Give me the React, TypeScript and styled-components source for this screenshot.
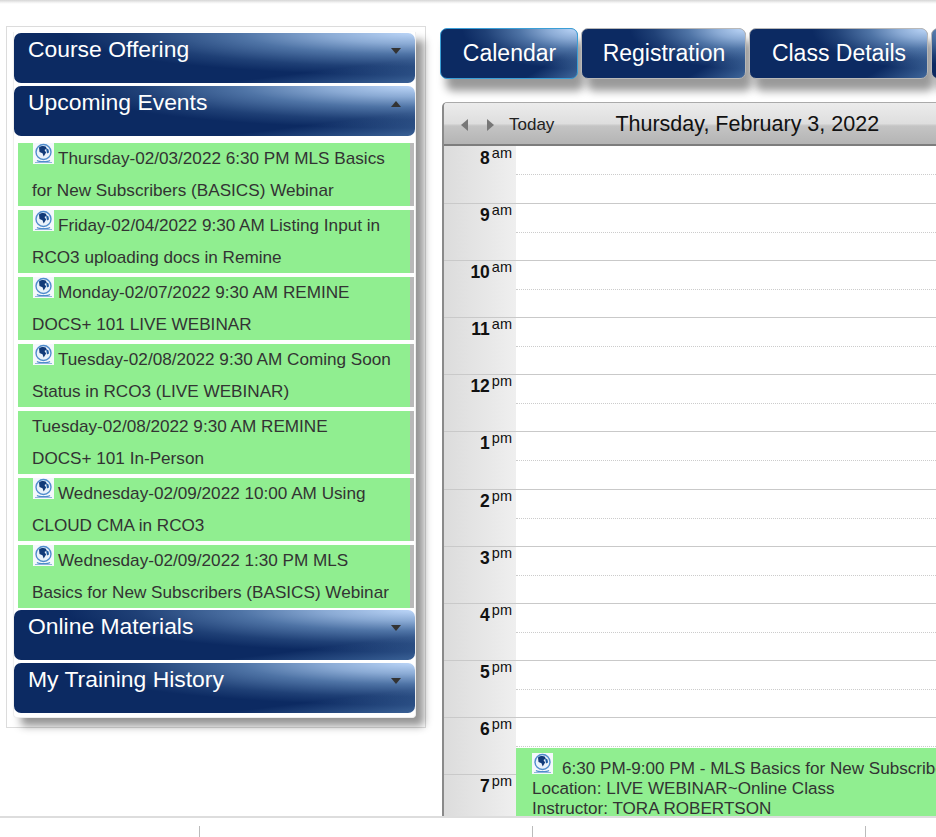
import React from "react";
import styled, { createGlobalStyle } from "styled-components";

const GlobalStyle = createGlobalStyle`
  html, body {
    margin: 0;
    padding: 0;
    height: 100%;
    overflow: hidden;
    background: #fff;
    font-family: "Liberation Sans", Arial, sans-serif;
  }
`;

const Page = styled.div`
  width: 936px;
  height: 837px;
  overflow: hidden;
  display: flex;
  flex-direction: column;
`;

const TopEdge = styled.div`
  height: 4px;
  flex: none;
  background: linear-gradient(to bottom, #d6d6d6, #f6f6f6 70%, #fff);
`;

const Main = styled.main`
  height: 812px;
  flex: none;
  overflow: hidden;
  display: flex;
  align-items: flex-start;
  padding: 22px 0 0 6px;
  box-sizing: border-box;
`;

const Sidebar = styled.aside`
  width: 420px;
  height: 702px;
  flex: none;
  box-sizing: border-box;
  border: 1px solid #dcdcdc;
  padding: 5px 0 0 6px;
`;

const Accordion = styled.div`
  width: 403px;
  height: 686px;
  box-sizing: border-box;
  padding-top: 1px;
  background: #fff;
  border: 1px solid #eee;
  border-top: none;
  border-radius: 0 0 4px 4px;
  box-shadow: 8px 8px 8px rgba(0, 0, 0, 0.42);
`;

const SectionHeader = styled.div<{ $gap?: number }>`
  height: 50px;
  margin-top: ${(p) => p.$gap ?? 0}px;
  padding: 2px 14px 0 14px;
  box-sizing: border-box;
  display: flex;
  justify-content: space-between;
  color: #fff;
  font-size: 22.9px;
  line-height: 28px;
  border-radius: 7px;
  background:
    linear-gradient(173deg, transparent 76%, rgba(90, 135, 185, 0.6) 100%),
    radial-gradient(ellipse 350px 42px at 100% 0, #bcd6f8 0%, #8aaad4 26%, #4f74a6 50%, #1f4076 80%, #0c2a62 100%);
  background-color: #0c2a62;
`;

const Caret = styled.span<{ $open?: boolean }>`
  width: 0;
  height: 0;
  margin-top: 13px;
  border-left: 5px solid transparent;
  border-right: 5px solid transparent;
  ${(p) =>
    p.$open
      ? "border-bottom: 6px solid #333;"
      : "border-top: 6px solid #333;"}
`;

const EventList = styled.div`
  display: flex;
  flex-direction: column;
  gap: 4px;
  padding: 7px 1px 2px 4px;
`;

const EventItem = styled.div`
  height: 63px;
  box-sizing: border-box;
  padding-left: 14px;
  background: #90ee90;
  border-right: 4px solid #b9b9b9;
  color: #333;
  font-size: 17.15px;
  line-height: 31.5px;
  white-space: nowrap;
  overflow: hidden;
`;

const GlobeBox = styled.svg<{ $inEvent?: boolean }>`
  display: inline-block;
  width: 21px;
  height: 21px;
  margin: ${(p) => (p.$inEvent ? "0 9px 0 0" : "0 4px 0 1px")};
  vertical-align: ${(p) => (p.$inEvent ? "baseline" : "top")};
`;

const Globe = ({ inEvent }: { inEvent?: boolean }) => (
  <GlobeBox viewBox="0 0 21 21" $inEvent={inEvent}>
    <rect width="21" height="21" fill="#f4f8fc" />
    <circle cx="10.5" cy="9" r="7.5" fill="#eaf2fa" stroke="#4f8ccc" strokeWidth="1.4" />
    <path d="M6 4.5c2-1.6 5-1.8 7 -.8l.5 2-2 1.2 1.6 2.6-2.4 4-1.2-3.2-3-1.4z" fill="#123a78" />
    <path d="M13 5l2.5 1.5.5 3-2 1z" fill="#1f5aa0" />
    <path d="M4 17.5c2 1.6 11 1.6 13 0" fill="none" stroke="#4f8ccc" strokeWidth="1.4" />
    <path d="M2 19.5h17" stroke="#8fb4dc" strokeWidth="1" />
  </GlobeBox>
);

const Content = styled.section`
  flex: 1;
  min-width: 0;
  margin-left: 14px;
  padding-top: 2px;
`;

const Tabs = styled.nav`
  display: flex;
  gap: 3px;
  height: 50px;
  width: 520px;
`;

const Tab = styled.div<{ $active?: boolean; $width: number }>`
  width: ${(p) => p.$width}px;
  flex: none;
  height: 51px;
  box-sizing: border-box;
  padding-left: 1px;
  display: flex;
  align-items: center;
  justify-content: center;
  color: #fff;
  font-size: 23px;
  border-radius: 7px;
  border: 1px solid ${(p) => (p.$active ? "#3b9fd6" : "#b8b8b8")};
  background:
    linear-gradient(149deg, transparent 76%, rgba(90, 135, 185, 0.65) 100%),
    radial-gradient(ellipse 115px 40px at 100% 0, #bcd6f8 0%, #8aaad4 26%, #4f74a6 50%, #1f4076 80%, #0c2a62 100%);
  background-color: #0c2a62;
  box-shadow: 6px 12px 8px rgba(0, 0, 0, 0.4);
`;

const Calendar = styled.div`
  margin: 24px 0 0 2px;
  border-left: 2px solid #8a8a8a;
  border-top: 1px solid #aaa;
  border-top-left-radius: 5px;
  width: 500px;
  height: 719px;
  overflow: hidden;
`;

const CalendarBar = styled.div`
  height: 43px;
  box-sizing: border-box;
  display: flex;
  align-items: center;
  padding: 2px 0 0 17px;
  border-bottom: 2px solid #7d7d7d;
  background: linear-gradient(to bottom, #ececec 0%, #dedede 50%, #c4c4c4 56%, #b4b4b4 100%);
`;

const NavArrow = styled.span<{ $dir: "left" | "right" }>`
  width: 0;
  height: 0;
  margin-right: ${(p) => (p.$dir === "left" ? 19 : 15)}px;
  border-top: 6px solid transparent;
  border-bottom: 6px solid transparent;
  ${(p) =>
    p.$dir === "left"
      ? "border-right: 7px solid #777;"
      : "border-left: 7px solid #777;"}
`;

const TodayLabel = styled.span`
  font-size: 17px;
  color: #222;
`;

const DateTitle = styled.span`
  font-size: 21.5px;
  color: #111;
  margin-left: 61px;
`;

const Grid = styled.div`
  position: relative;
`;

const Gutter = styled.div`
  width: 72px;
  flex: none;
  box-sizing: border-box;
  padding-right: 4px;
  display: flex;
  justify-content: flex-end;
  align-items: flex-start;
  color: #111;
  background: linear-gradient(to right, #dcdcdc, #efefef);
`;

const HourRow = styled.div`
  height: 57.1px;
  box-sizing: border-box;
  display: flex;

  & + & {
    border-top: 1px solid #c9c9c9;
  }

  &:first-child ${Gutter} {
    padding-top: 1px;
  }
`;

const HourNum = styled.b`
  font-size: 17.5px;
  line-height: 1;
  margin: 3px 2px 0 0;
`;

const Meridiem = styled.span`
  font-size: 14.5px;
  line-height: 1;
  margin-top: -1px;
`;

const Slot = styled.div`
  flex: 1;
  position: relative;
  background: #fff;

  &::after {
    content: "";
    position: absolute;
    left: 0;
    right: 0;
    top: 28px;
    border-top: 1px dotted #ccc;
  }
`;

const CalendarEvent = styled.div`
  position: absolute;
  left: 72px;
  right: 0;
  top: 602px;
  height: 70px;
  box-sizing: border-box;
  padding: 5px 0 0 16px;
  background: #90ee90;
  color: #333;
  font-size: 17.1px;
  line-height: 20px;
  white-space: nowrap;
`;

const Footer = styled.footer`
  height: 21px;
  flex: none;
  display: flex;
  box-sizing: border-box;
  border-top: 2px solid #ddd;
  padding-top: 8px;
`;

const FooterCell = styled.div<{ $width: number }>`
  width: ${(p) => p.$width}px;
  flex: none;
  box-sizing: border-box;
  border-right: 1px solid #bbb;
`;

const events = [
  { globe: true, first: "Thursday-02/03/2022 6:30 PM MLS Basics", second: "for New Subscribers (BASICS) Webinar" },
  { globe: true, first: "Friday-02/04/2022 9:30 AM Listing Input in", second: "RCO3 uploading docs in Remine" },
  { globe: true, first: "Monday-02/07/2022 9:30 AM REMINE", second: "DOCS+ 101 LIVE WEBINAR" },
  { globe: true, first: "Tuesday-02/08/2022 9:30 AM Coming Soon", second: "Status in RCO3 (LIVE WEBINAR)" },
  { globe: false, first: "Tuesday-02/08/2022 9:30 AM REMINE", second: "DOCS+ 101 In-Person" },
  { globe: true, first: "Wednesday-02/09/2022 10:00 AM Using", second: "CLOUD CMA in RCO3" },
  { globe: true, first: "Wednesday-02/09/2022 1:30 PM MLS", second: "Basics for New Subscribers (BASICS) Webinar" },
];

const hours = [
  ["8", "am"],
  ["9", "am"],
  ["10", "am"],
  ["11", "am"],
  ["12", "pm"],
  ["1", "pm"],
  ["2", "pm"],
  ["3", "pm"],
  ["4", "pm"],
  ["5", "pm"],
  ["6", "pm"],
  ["7", "pm"],
];

export default function App() {
  return (
    <Page>
      <GlobalStyle />
      <TopEdge />
      <Main>
        <Sidebar>
          <Accordion>
            <SectionHeader>
              Course Offering
              <Caret />
            </SectionHeader>
            <SectionHeader $gap={3}>
              Upcoming Events
              <Caret $open />
            </SectionHeader>
            <EventList>
              {events.map((e) => (
                <EventItem key={e.first}>
                  {e.globe && <Globe />}
                  {e.first}
                  <br />
                  {e.second}
                </EventItem>
              ))}
            </EventList>
            <SectionHeader>
              Online Materials
              <Caret />
            </SectionHeader>
            <SectionHeader $gap={3}>
              My Training History
              <Caret />
            </SectionHeader>
          </Accordion>
        </Sidebar>
        <Content>
          <Tabs>
            <Tab $active $width={138}>Calendar</Tab>
            <Tab $width={165}>Registration</Tab>
            <Tab $width={179}>Class Details</Tab>
            <Tab $width={60} />
          </Tabs>
          <Calendar>
            <CalendarBar>
              <NavArrow $dir="left" />
              <NavArrow $dir="right" />
              <TodayLabel>Today</TodayLabel>
              <DateTitle>Thursday, February 3, 2022</DateTitle>
            </CalendarBar>
            <Grid>
              {hours.map(([h, m]) => (
                <HourRow key={h + m}>
                  <Gutter>
                    <HourNum>{h}</HourNum>
                    <Meridiem>{m}</Meridiem>
                  </Gutter>
                  <Slot />
                </HourRow>
              ))}
              <CalendarEvent>
                <Globe inEvent />
                6:30 PM-9:00 PM - MLS Basics for New Subscribers (BASICS) Webinar
                <br />
                Location: LIVE WEBINAR~Online Class
                <br />
                Instructor: TORA ROBERTSON
              </CalendarEvent>
            </Grid>
          </Calendar>
        </Content>
      </Main>
      <Footer>
        <FooterCell $width={200} />
        <FooterCell $width={333} />
        <FooterCell $width={333} />
      </Footer>
    </Page>
  );
}
